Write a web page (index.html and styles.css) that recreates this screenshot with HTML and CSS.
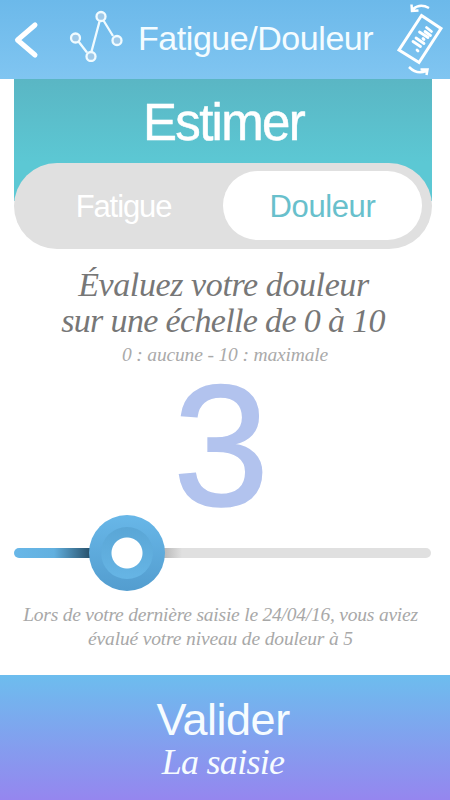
FILE: index.html
```html
<!DOCTYPE html>
<html lang="fr">
<head>
    <meta charset="UTF-8">
    <title>Fatigue/Douleur</title>
    <link rel="stylesheet" href="styles.css">
</head>
<body>
    <header class="topbar">
        <svg class="back" width="26" height="38" viewBox="0 0 26 38">
            <path d="M22 4 L4.500 19 L22 34"/>
        </svg>
        <svg class="graph" width="54" height="52" viewBox="0 0 54 52">
            <path d="M9.500 31.500 L18 42.500 M22.500 41.500 L30.500 11.500 M34.500 10.500 L44 26"/>
            <circle cx="6.500" cy="28" r="4.500"/>
            <circle cx="22" cy="46.500" r="4.500"/>
            <circle cx="32" cy="6.500" r="4.500"/>
            <circle cx="48" cy="30.500" r="4.500"/>
        </svg>
        <h1>Fatigue/Douleur</h1>
        <svg class="rotate" width="50" height="78" viewBox="0 0 50 78">
            <path class="phone" d="M21.500 15.500 L41 28.500 L19 62.500 L-1 50 Z"/>
            <path class="bars" d="M17 50 L18 51 M13 41.500 L20.500 46.500 M16 38 L24 43.500 M23 38.500 L24 39.500 M19.500 32 L28 37.500 M25 31.500 L30.500 35.500 M26.500 27.500 L31.500 31.500"/>
            <path class="arrow" d="M29 8 Q20 3 13 9 M11.500 4.500 L12 11 L18.500 10.500"/>
            <path class="arrow" d="M9 67 Q17 75 26 71 M20.500 69.500 L27.500 69.500 L26.500 75"/>
        </svg>
    </header>

    <div class="estimate">
        <h2>Estimer</h2>
        <div class="switch">
            <span class="option">Fatigue</span>
            <span class="option active">Douleur</span>
        </div>
    </div>

    <div class="question">
        <p class="line1">Évaluez votre douleur</p>
        <p class="line2">sur une échelle de 0 à 10</p>
        <p class="legend">0 : aucune - 10 : maximale</p>
    </div>

    <div class="score">3</div>

    <div class="slider">
        <div class="track"></div>
        <div class="knob"></div>
    </div>

    <div class="last">
        <p class="last1">Lors de votre dernière saisie le 24/04/16, vous aviez</p>
        <p class="last2">évalué votre niveau de douleur à 5</p>
    </div>

    <footer class="submit">
        <span class="valider">Valider</span>
        <span class="saisie">La saisie</span>
    </footer>
</body>
</html>
```
FILE: styles.css
```css
* {
    box-sizing: border-box;
}

body {
    margin: 0;
    height: 800px;
    display: flex;
    flex-direction: column;
    overflow: hidden;
    background: #fff;
    font-family: "Liberation Sans", Arial, sans-serif;
}

h1, h2, p {
    margin: 0;
    font-weight: normal;
    white-space: nowrap;
}

svg {
    fill: none;
    stroke: #fff;
    flex: none;
}

.topbar {
    height: 79px;
    flex: none;
    display: flex;
    align-items: flex-start;
    background: linear-gradient(#6cb9ea, #80c5f1);
}

.back {
    margin: 21px 0 0 13px;
    stroke-width: 5;
    stroke-linecap: round;
    stroke-linejoin: round;
}

.graph {
    margin: 10px 0 0 30px;
    stroke: #f0fbff;
    stroke-width: 2.3;
}

.graph circle {
    fill: #9fc9e8;
}

.topbar h1 {
    width: 250px;
    margin: 18px 0 0 15px;
    font-size: 34px;
    line-height: 40px;
    letter-spacing: -0.45px;
    color: #f4fcff;
}

.rotate {
    margin-left: 12px;
    overflow: visible;
}

.phone {
    stroke-width: 3;
}

.bars {
    stroke-width: 2.8;
    stroke-linecap: round;
}

.arrow {
    stroke-width: 2.5;
}

.estimate {
    height: 170px;
    flex: none;
    margin: 0 18px 0 14px;
    background: linear-gradient(#5ab6c4, #5cc8d4 84px, #5cc8d4 122px, #fff 122px);
}

.estimate h2 {
    height: 84px;
    padding: 14px 0 0 1px;
    text-align: center;
    font-size: 51px;
    line-height: 60px;
    letter-spacing: -1.7px;
    color: #fff;
    -webkit-text-stroke: 0.5px #fff;
}

.switch {
    height: 86px;
    display: flex;
    padding: 8px 10px 9px 10px;
    border-radius: 43px;
    background: #e0e0e0;
}

.option {
    flex: 1;
    text-align: center;
    font-size: 31px;
    line-height: 72px;
    letter-spacing: -1.1px;
    color: #fff;
}

.active {
    border-radius: 35px;
    background: #fff;
    letter-spacing: -0.4px;
    color: #68c0cc;
}

.question, .last {
    font-family: "Liberation Serif", "Times New Roman", serif;
    font-style: italic;
    text-align: center;
}

.question {
    height: 122px;
    flex: none;
    padding: 18px 0 0 0;
    font-size: 34px;
    line-height: 36px;
    color: #777;
}

.line1 {
    padding-right: 3px;
    letter-spacing: -0.4px;
}

.line2 {
    padding-right: 4px;
    letter-spacing: -0.65px;
}

.question .legend {
    font-size: 19.5px;
    line-height: 32px;
    letter-spacing: -0.15px;
    color: #aaa;
}

.score {
    height: 144px;
    flex: none;
    padding-right: 8px;
    text-align: center;
    font-size: 173px;
    line-height: 149px;
    color: #b2c3ee;
    -webkit-text-stroke: 1.5px #b2c3ee;
}

.slider {
    position: relative;
    height: 76px;
    flex: none;
    margin: 0 19px 0 14px;
    padding-top: 33px;
}

.track {
    height: 10px;
    border-radius: 5px;
    background: linear-gradient(90deg, #68b7e8 0, #62b0df 40px, #1f4259 82px, #1f4259 112px, #a8a8a8 142px, #e0e0e0 168px);
}

.knob {
    position: absolute;
    left: 75px;
    top: 0;
    width: 76px;
    height: 76px;
    padding: 12px;
    border-radius: 50%;
    background: linear-gradient(#68b7e8, #539dcf);
}

/* inner ring, lit from below */
.knob::before {
    content: "";
    display: block;
    height: 52px;
    border-radius: 50%;
    background:
        radial-gradient(circle, #fff 15px, transparent 16px),
        linear-gradient(#5aa6d6, #66b5e5);
}

.last {
    height: 84px;
    flex: none;
    padding: 12px 9px 0 0;
    font-size: 19.5px;
    line-height: 24px;
    color: #a8a8a8;
}

.last1 {
    letter-spacing: -0.22px;
}

.last2 {
    letter-spacing: -0.15px;
}

.submit {
    flex: 1;
    display: flex;
    flex-direction: column;
    align-items: center;
    padding: 19px 4px 0 0;
    background: linear-gradient(#6dbdee, #9586ef);
    color: #f6fcff;
}

.valider {
    font-size: 45px;
    line-height: 52px;
    letter-spacing: -0.5px;
}

.saisie {
    font-family: "Liberation Serif", "Times New Roman", serif;
    font-style: italic;
    font-size: 36px;
    line-height: 33px;
    letter-spacing: -0.7px;
}
```
